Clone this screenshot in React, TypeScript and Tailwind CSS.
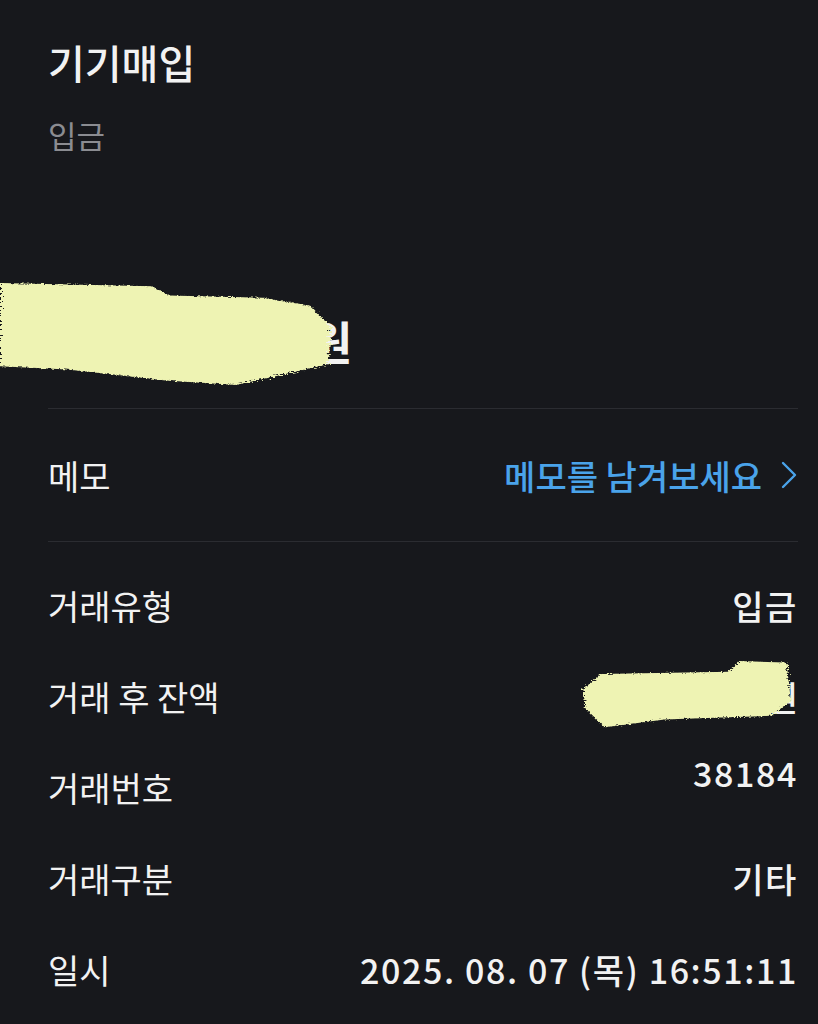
import React from "react";

const FONT = { fontFamily: '"Noto Sans CJK KR", "Noto Sans", sans-serif' };

// rough highlighter mark used to hide amounts
const Scribble = ({ id, d, className }: { id: string; d: string; className: string }) => (
  <svg className={className} viewBox="0 0 100 100" preserveAspectRatio="none" aria-hidden>
    <defs>
      <filter id={id} x="-10%" y="-20%" width="120%" height="140%">
        <feTurbulence type="fractalNoise" baseFrequency="0.9" numOctaves="2" seed="3" />
        <feDisplacementMap in="SourceGraphic" scale="4" />
      </filter>
    </defs>
    <path d={d} fill="#eef3b3" filter={`url(#${id})`} />
  </svg>
);

const rows = [
  { label: "거래유형", value: "입금" },
  { label: "거래 후 잔액", value: "hidden" },
  { label: "거래번호", value: "38184", up: true },
  { label: "거래구분", value: "기타" },
  { label: "일시", value: "2025. 08. 07 (목) 16:51:11" },
];

export default function App() {
  return (
    <div className="min-h-[1024px] w-full overflow-hidden bg-[#17181c] text-[#f2f2f2]" style={FONT}>
      <div className="pl-[48px] pr-[20px]">
        <h1 className="pt-[36px] text-[40px] font-medium leading-[52px]">기기매입</h1>
        <p className="mt-[27px] text-[31px] leading-[40px] text-[#8b8c91]">입금</p>

        <div className="mb-[26px] mt-[143px] flex h-[84px] items-center">
          <span className="relative pl-[262px] text-[46px] font-bold leading-none">
            원
            <Scribble
              id="blobA"
              className="absolute -left-[48px] -top-[36px] h-[104px] w-[338px]"
              d="M0 2 L45 5 L50 14 L78 16 L92 24 L98 45 L97 80 L70 100 L50 96 L20 85 L0 82 Z"
            />
          </span>
        </div>

        <div className="h-px bg-[#2b2c31]" />

        <div className="flex h-[132px] items-center justify-between">
          <span className="text-[34px]">메모</span>
          <span className="flex items-center gap-[18px] text-[34px] font-medium text-[#4aa3ea]">
            메모를 남겨보세요
            <svg width="18" height="30" viewBox="0 0 18 30" fill="none">
              <path d="M3 3 L15 15 L3 27" stroke="#4aa3ea" strokeWidth="2.4" strokeLinecap="round" strokeLinejoin="round" />
            </svg>
          </span>
        </div>

        <div className="h-px bg-[#2b2c31]" />

        <div className="pt-[18px]">
          {rows.map((r) => (
            <div key={r.label} className="flex h-[91px] items-center justify-between">
              <span className="text-[34px] font-normal">{r.label}</span>
              {r.value === "hidden" ? (
                <span className="relative text-[34px] font-medium">
                  <span className="pl-[180px]">원</span>
                  <Scribble
                    id="blobB"
                    className="absolute -left-[8px] -top-[16px] h-[76px] w-[214px]"
                    d="M2 45 L10 25 L70 22 L75 8 L97 10 L99 60 L90 80 L70 82 L40 85 L12 95 L3 70 Z"
                  />
                </span>
              ) : (
                <span className={`text-[34px] font-medium tracking-[1.6px] ${r.up ? "-mt-[30px]" : ""}`}>{r.value}</span>
              )}
            </div>
          ))}
        </div>
      </div>
    </div>
  );
}
